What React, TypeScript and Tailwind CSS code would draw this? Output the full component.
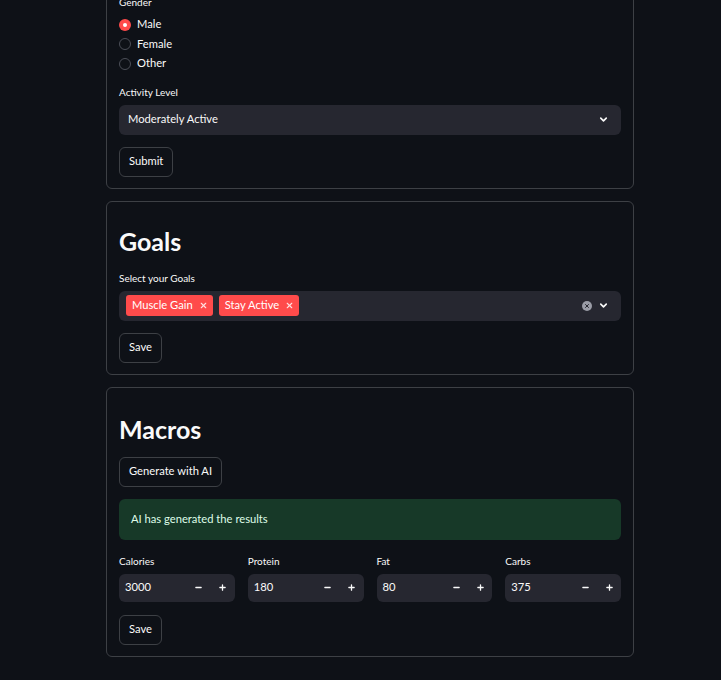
import { ChevronDown, Minus, Plus, X } from 'lucide-react'

const font = { fontFamily: 'Lato, "Noto Sans", sans-serif' }

function Label({ children }: { children: React.ReactNode }) {
  return <div className="mb-[4px] flex h-[18px] items-center text-[10px] leading-none text-[#fafafa]">{children}</div>
}

function Button({ children }: { children: React.ReactNode }) {
  return (
    <div>
      <button className="h-[30px] rounded-[6px] border border-[#3d4045] bg-[#0e1117] px-[9px] text-[11.2px] text-[#fafafa]">
        {children}
      </button>
    </div>
  )
}

function Card({ children, className = '' }: { children: React.ReactNode; className?: string }) {
  return (
    <div className={`flex flex-col gap-[12px] rounded-[6px] border border-[#3d4045] px-[12px] pt-[12px] pb-[11px] ${className}`}>
      {children}
    </div>
  )
}

function Radio({ label, checked }: { label: string; checked?: boolean }) {
  return (
    <div className="flex h-[19.5px] items-center gap-[6px]">
      {checked ? (
        <span className="flex h-[12px] w-[12px] items-center justify-center rounded-full bg-[#ff4b4b]">
          <span className="h-[4px] w-[4px] rounded-full bg-white" />
        </span>
      ) : (
        <span className="h-[12px] w-[12px] rounded-full border border-[#4b4e57]" />
      )}
      <span className="text-[11.2px] text-[#fafafa]">{label}</span>
    </div>
  )
}

function Tag({ label }: { label: string }) {
  return (
    <span className="flex h-[21px] items-center gap-[6px] rounded-[3px] bg-[#ff4b4b] pl-[6px] pr-[5px] text-[11.2px] text-white">
      {label}
      <X size={9} strokeWidth={3} className="text-[#ffe0e0]" />
    </span>
  )
}

function NumberInput({ label, value }: { label: string; value: string }) {
  return (
    <div>
      <Label>{label}</Label>
      <div className="flex h-[28px] items-center rounded-[6px] bg-[#262730] pl-[6px] text-[11.2px] text-[#fafafa]">
        <span className="flex-1">{value}</span>
        <span className="flex w-[24px] justify-center">
          <Minus size={9} strokeWidth={3.5} />
        </span>
        <span className="flex w-[24px] justify-center">
          <Plus size={9} strokeWidth={3.5} />
        </span>
      </div>
    </div>
  )
}

export default function App() {
  return (
    <div className="min-h-[680px] bg-[#0e1117] text-[#fafafa]" style={font}>
      <div className="ml-[106px] flex w-[528px] flex-col gap-[12px] pb-[24px]">
        <Card className="-mt-[20px]">
          <div>
            <Label>Gender</Label>
            <div className="mt-[1px] flex flex-col">
              <Radio label="Male" checked />
              <Radio label="Female" />
              <Radio label="Other" />
            </div>
          </div>
          <div className="-mt-[3px]">
            <Label>Activity Level</Label>
            <div className="flex h-[30px] items-center rounded-[6px] bg-[#262730] pl-[9px] pr-[12px] text-[11.2px]">
              <span className="flex-1">Moderately Active</span>
              <ChevronDown size={11} strokeWidth={3.5} />
            </div>
          </div>
          <Button>Submit</Button>
        </Card>

        <Card>
          <h2 className="pt-[12px] text-[25px] font-bold leading-[31px]">Goals</h2>
          <div>
            <Label>Select your Goals</Label>
            <div className="mt-[1px] flex h-[30px] items-center gap-[6px] rounded-[6px] bg-[#262730] pl-[7px] pr-[12px]">
              <Tag label="Muscle Gain" />
              <Tag label="Stay Active" />
              <span className="flex-1" />
              <span className="flex h-[10px] w-[10px] items-center justify-center rounded-full bg-[#9a9ca6]">
                <X size={6} strokeWidth={4} className="text-[#262730]" />
              </span>
              <ChevronDown size={11} strokeWidth={3.5} />
            </div>
          </div>
          <Button>Save</Button>
        </Card>

        <Card>
          <h2 className="pt-[14px] text-[25px] font-bold leading-[31px]">Macros</h2>
          <Button>Generate with AI</Button>
          <div className="flex h-[41px] items-center rounded-[6px] bg-[#173928] px-[12px] text-[11.2px] text-[#dffde9]">
            AI has generated the results
          </div>
          <div className="grid grid-cols-4 gap-[13px]">
            <NumberInput label="Calories" value="3000" />
            <NumberInput label="Protein" value="180" />
            <NumberInput label="Fat" value="80" />
            <NumberInput label="Carbs" value="375" />
          </div>
          <div className="mt-[1px]">
            <Button>Save</Button>
          </div>
        </Card>
      </div>
    </div>
  )
}
